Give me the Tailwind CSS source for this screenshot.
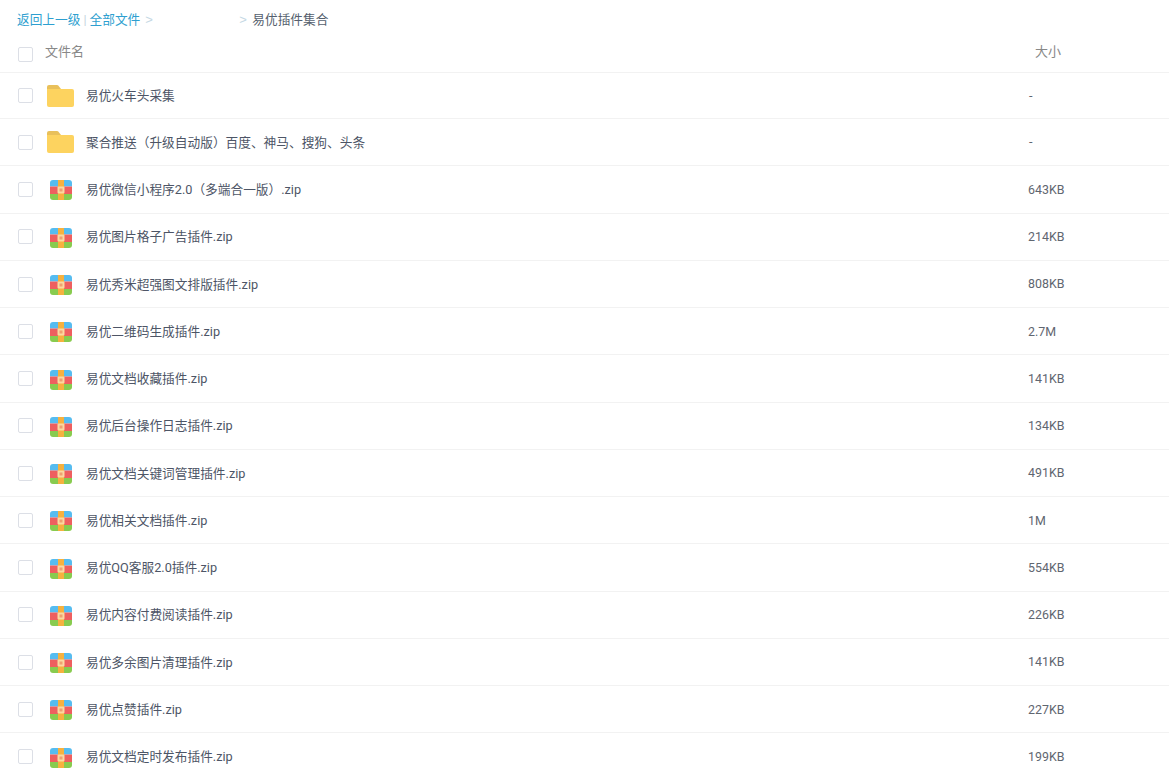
<!DOCTYPE html>
<html lang="zh">
<head>
  <meta charset="UTF-8" />
  <title>易优插件集合</title>
  <script src="https://cdn.jsdelivr.net/npm/@tailwindcss/browser@4"></script>
</head>
<body class="bg-white overflow-hidden font-['Roboto','Noto_Sans_CJK_SC',sans-serif] text-[12.7px] text-[#4d5566]">
  <svg class="hidden">
    <symbol id="folder" viewBox="0 0 27 22">
      <path d="M0 4h25a2 2 0 0 1 2 2v14a2 2 0 0 1-2 2H2a2 2 0 0 1-2-2z" fill="#fdd35f"/>
      <path d="M0 2a2 2 0 0 1 2-2h8a2 2 0 0 1 1.500.7L14 4H0z" fill="#e9c05a"/>
    </symbol>
    <symbol id="zip" viewBox="0 0 22 20">
      <rect width="22" height="6.500" fill="#56bcf0"/>
      <rect y="6.500" width="22" height="7.500" fill="#ee5f5f"/>
      <rect y="14" width="22" height="6" fill="#88cb4f"/>
      <rect x="8" width="6" height="20" fill="#f6b13f"/>
      <rect x="7.500" y="6.500" width="7" height="7" rx="1" fill="#fbd9a0"/>
      <rect x="9.500" y="8.500" width="3" height="3" fill="#f0a070"/>
    </symbol>
  </svg>

  <div class="w-[1169px] h-[778px] overflow-hidden">
    <div class="h-[39px] flex items-center pl-[17px]">
      <a class="text-[#2e9fd0]">返回上一级</a>
      <span class="mx-[3px] text-[#c5d5de]">|</span>
      <a class="text-[#2e9fd0]">全部文件</a>
      <span class="ml-[5px] w-[94px] font-['Liberation_Sans'] text-[13px] text-[#c5d8e4]">&gt;</span>
      <span class="w-[13px] font-['Liberation_Sans'] text-[13px] text-[#c5d8e4]">&gt;</span>
      <span class="text-[#555f6e]">易优插件集合</span>
    </div>

    <div class="h-[34px] flex items-start border-b border-[#f2f2f2] text-[#888888] text-[13px]">
      <span class="w-[15px] h-[15px] ml-[18px] mt-[8px] border border-[#dcdfe6] rounded-[2px]"></span>
      <span class="ml-[12px] mt-[3px]">文件名</span>
      <span class="ml-[951px] mt-[3px]">大小</span>
    </div>

    <div id="rows">
      <div class="h-[46px] flex items-center border-b border-[#f2f2f2]">
        <span class="w-[15px] h-[15px] ml-[18px] border border-[#dcdfe6] rounded-[2px]"></span>
        <svg class="w-[27px] h-[22px] ml-[14px]"><use href="#folder"/></svg>
        <span class="ml-[12px] w-[943px]">易优火车头采集</span>
        <span class="text-[#5f6670]">-</span>
      </div>
      <div class="h-[47px] flex items-center border-b border-[#f2f2f2]">
        <span class="w-[15px] h-[15px] ml-[18px] border border-[#dcdfe6] rounded-[2px]"></span>
        <svg class="w-[27px] h-[22px] ml-[14px]"><use href="#folder"/></svg>
        <span class="ml-[12px] w-[943px]">聚合推送<span class="font-['Noto_Sans_CJK_TC']">（</span>升级自动版<span class="font-['Noto_Sans_CJK_TC']">）</span>百度、神马、搜狗、头条</span>
        <span class="text-[#5f6670]">-</span>
      </div>
      <div class="h-[47.7px] flex items-center border-b border-[#f2f2f2]">
        <span class="w-[15px] h-[15px] ml-[18px] border border-[#dcdfe6] rounded-[2px]"></span>
        <svg class="w-[22px] h-[20px] ml-[17px] mt-[2px] rounded-[3px]"><use href="#zip"/></svg>
        <span class="ml-[14px] w-[942px]">易优微信小程序2.0<span class="font-['Noto_Sans_CJK_TC']">（</span>多端合一版<span class="font-['Noto_Sans_CJK_TC']">）</span>.zip</span>
        <span class="mt-px text-[12.4px] text-[#5f6670]">643KB</span>
      </div>
      <div class="h-[47.25px] flex items-center border-b border-[#f2f2f2]">
        <span class="w-[15px] h-[15px] ml-[18px] border border-[#dcdfe6] rounded-[2px]"></span>
        <svg class="w-[22px] h-[20px] ml-[17px] mt-[2px] rounded-[3px]"><use href="#zip"/></svg>
        <span class="ml-[14px] w-[942px]">易优图片格子广告插件.zip</span>
        <span class="mt-px text-[12.4px] text-[#5f6670]">214KB</span>
      </div>
      <div class="h-[47.25px] flex items-center border-b border-[#f2f2f2]">
        <span class="w-[15px] h-[15px] ml-[18px] border border-[#dcdfe6] rounded-[2px]"></span>
        <svg class="w-[22px] h-[20px] ml-[17px] mt-[2px] rounded-[3px]"><use href="#zip"/></svg>
        <span class="ml-[14px] w-[942px]">易优秀米超强图文排版插件.zip</span>
        <span class="mt-px text-[12.4px] text-[#5f6670]">808KB</span>
      </div>
      <div class="h-[47.25px] flex items-center border-b border-[#f2f2f2]">
        <span class="w-[15px] h-[15px] ml-[18px] border border-[#dcdfe6] rounded-[2px]"></span>
        <svg class="w-[22px] h-[20px] ml-[17px] mt-[2px] rounded-[3px]"><use href="#zip"/></svg>
        <span class="ml-[14px] w-[942px]">易优二维码生成插件.zip</span>
        <span class="mt-px text-[12.4px] text-[#5f6670]">2.7M</span>
      </div>
      <div class="h-[47.25px] flex items-center border-b border-[#f2f2f2]">
        <span class="w-[15px] h-[15px] ml-[18px] border border-[#dcdfe6] rounded-[2px]"></span>
        <svg class="w-[22px] h-[20px] ml-[17px] mt-[2px] rounded-[3px]"><use href="#zip"/></svg>
        <span class="ml-[14px] w-[942px]">易优文档收藏插件.zip</span>
        <span class="mt-px text-[12.4px] text-[#5f6670]">141KB</span>
      </div>
      <div class="h-[47.25px] flex items-center border-b border-[#f2f2f2]">
        <span class="w-[15px] h-[15px] ml-[18px] border border-[#dcdfe6] rounded-[2px]"></span>
        <svg class="w-[22px] h-[20px] ml-[17px] mt-[2px] rounded-[3px]"><use href="#zip"/></svg>
        <span class="ml-[14px] w-[942px]">易优后台操作日志插件.zip</span>
        <span class="mt-px text-[12.4px] text-[#5f6670]">134KB</span>
      </div>
      <div class="h-[47.25px] flex items-center border-b border-[#f2f2f2]">
        <span class="w-[15px] h-[15px] ml-[18px] border border-[#dcdfe6] rounded-[2px]"></span>
        <svg class="w-[22px] h-[20px] ml-[17px] mt-[2px] rounded-[3px]"><use href="#zip"/></svg>
        <span class="ml-[14px] w-[942px]">易优文档关键词管理插件.zip</span>
        <span class="mt-px text-[12.4px] text-[#5f6670]">491KB</span>
      </div>
      <div class="h-[47.25px] flex items-center border-b border-[#f2f2f2]">
        <span class="w-[15px] h-[15px] ml-[18px] border border-[#dcdfe6] rounded-[2px]"></span>
        <svg class="w-[22px] h-[20px] ml-[17px] mt-[2px] rounded-[3px]"><use href="#zip"/></svg>
        <span class="ml-[14px] w-[942px]">易优相关文档插件.zip</span>
        <span class="mt-px text-[12.4px] text-[#5f6670]">1M</span>
      </div>
      <div class="h-[47.25px] flex items-center border-b border-[#f2f2f2]">
        <span class="w-[15px] h-[15px] ml-[18px] border border-[#dcdfe6] rounded-[2px]"></span>
        <svg class="w-[22px] h-[20px] ml-[17px] mt-[2px] rounded-[3px]"><use href="#zip"/></svg>
        <span class="ml-[14px] w-[942px]">易优QQ客服2.0插件.zip</span>
        <span class="mt-px text-[12.4px] text-[#5f6670]">554KB</span>
      </div>
      <div class="h-[47.25px] flex items-center border-b border-[#f2f2f2]">
        <span class="w-[15px] h-[15px] ml-[18px] border border-[#dcdfe6] rounded-[2px]"></span>
        <svg class="w-[22px] h-[20px] ml-[17px] mt-[2px] rounded-[3px]"><use href="#zip"/></svg>
        <span class="ml-[14px] w-[942px]">易优内容付费阅读插件.zip</span>
        <span class="mt-px text-[12.4px] text-[#5f6670]">226KB</span>
      </div>
      <div class="h-[47.25px] flex items-center border-b border-[#f2f2f2]">
        <span class="w-[15px] h-[15px] ml-[18px] border border-[#dcdfe6] rounded-[2px]"></span>
        <svg class="w-[22px] h-[20px] ml-[17px] mt-[2px] rounded-[3px]"><use href="#zip"/></svg>
        <span class="ml-[14px] w-[942px]">易优多余图片清理插件.zip</span>
        <span class="mt-px text-[12.4px] text-[#5f6670]">141KB</span>
      </div>
      <div class="h-[47.25px] flex items-center border-b border-[#f2f2f2]">
        <span class="w-[15px] h-[15px] ml-[18px] border border-[#dcdfe6] rounded-[2px]"></span>
        <svg class="w-[22px] h-[20px] ml-[17px] mt-[2px] rounded-[3px]"><use href="#zip"/></svg>
        <span class="ml-[14px] w-[942px]">易优点赞插件.zip</span>
        <span class="mt-px text-[12.4px] text-[#5f6670]">227KB</span>
      </div>
      <div class="h-[47.25px] flex items-center border-b border-[#f2f2f2]">
        <span class="w-[15px] h-[15px] ml-[18px] border border-[#dcdfe6] rounded-[2px]"></span>
        <svg class="w-[22px] h-[20px] ml-[17px] mt-[2px] rounded-[3px]"><use href="#zip"/></svg>
        <span class="ml-[14px] w-[942px]">易优文档定时发布插件.zip</span>
        <span class="mt-px text-[12.4px] text-[#5f6670]">199KB</span>
      </div>
    </div>
  </div>
</body>
</html>
